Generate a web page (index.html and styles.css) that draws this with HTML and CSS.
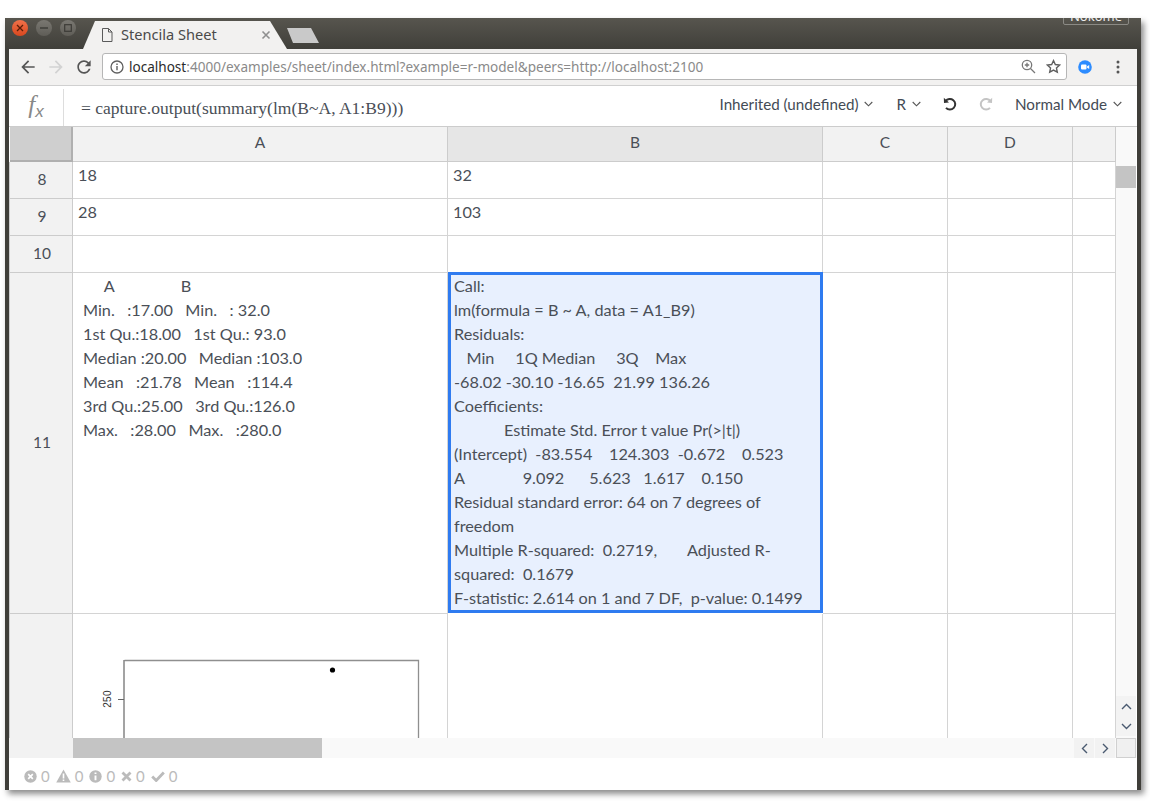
FILE: index.html
```html
<!DOCTYPE html>
<html lang="en">
<head>
<meta charset="utf-8">
<title>Stencila Sheet</title>
<link rel="stylesheet" href="styles.css">
</head>
<body>
<div class="window">
  <div class="titlebar">
    <div class="controls">
      <span class="ctl ctl-close"><svg width="8" height="8" viewBox="0 0 8 8"><path d="M1 1l6 6M7 1l-6 6" stroke="#5a1d08" stroke-width="1.3"/></svg></span>
      <span class="ctl"><svg width="8" height="8" viewBox="0 0 8 8"><path d="M0 4h8" stroke="#3c3b37" stroke-width="1.4"/></svg></span>
      <span class="ctl"><svg width="8" height="8" viewBox="0 0 8 8"><rect x=".7" y=".7" width="6.6" height="6.6" fill="none" stroke="#3c3b37" stroke-width="1.2"/></svg></span>
    </div>
    <div class="tab">
      <svg class="tab-doc" width="12" height="14" viewBox="0 0 12 14"><path d="M1.5.5h6l3.5 3.500v9.500h-9.500zM7.500.5v3.500h3.500" fill="none" stroke="#5a5a5a"/></svg>
      <span class="tab-title">Stencila Sheet</span>
      <svg class="tab-x" width="10" height="10" viewBox="0 0 10 10"><path d="M1.500 1.500l7 7M8.500 1.500l-7 7" stroke="#8f8f8f" stroke-width="1.600"/></svg>
    </div>
    <div class="newtab"></div>
    <div class="badge">Nokome</div>
  </div>
  <div class="body">
    <div class="toolbar">
      <svg class="nav" width="20" height="20" viewBox="0 0 24 24"><path d="M20 11H7.830l5.590-5.590L12 4l-8 8 8 8 1.410-1.410L7.830 13H20v-2z" fill="#555"/></svg>
      <svg class="nav" width="20" height="20" viewBox="0 0 24 24"><path d="M4 11h12.170l-5.590-5.590L12 4l8 8-8 8-1.410-1.410L16.170 13H4v-2z" fill="#d2d2d2"/></svg>
      <svg class="nav" width="20" height="20" viewBox="0 0 24 24"><path d="M17.650 6.350C16.200 4.900 14.210 4 12 4c-4.420 0-7.990 3.580-7.990 8s3.570 8 7.990 8c3.730 0 6.840-2.550 7.730-6h-2.080c-.82 2.330-3.040 4-5.650 4-3.310 0-6-2.690-6-6s2.690-6 6-6c1.660 0 3.140.69 4.220 1.780L13 11h7V4l-2.350 2.350z" fill="#555"/></svg>
      <div class="omnibox">
        <svg class="info" width="14" height="14" viewBox="0 0 14 14"><circle cx="7" cy="7" r="6" fill="none" stroke="#5f5f5f" stroke-width="1.300"/><path d="M7 6v4.200M7 3.600v1.400" stroke="#5f5f5f" stroke-width="1.400"/></svg>
        <span class="url"><span class="host">localhost</span>:4000/examples/sheet/index.html?example=r-model&amp;peers=http://localhost:2100</span>
        <svg class="omni-zoom" width="15" height="15" viewBox="0 0 15 15"><circle cx="6" cy="6" r="4.700" fill="none" stroke="#777" stroke-width="1.300"/><path d="M9.500 9.500l4.500 4.500M6 3.800v4.400M3.800 6h4.400" stroke="#777" stroke-width="1.300"/></svg>
        <svg class="omni-star" width="15" height="15" viewBox="0 0 24 24"><path d="M12 2.500l2.900 6.300 6.900.8-5.100 4.700 1.400 6.800-6.100-3.400-6.100 3.400 1.400-6.800-5.100-4.700 6.900-.8z" fill="none" stroke="#5f5f5f" stroke-width="2.200"/></svg>
      </div>
      <svg class="ext" width="14" height="14" viewBox="0 0 14 14"><circle cx="7" cy="7" r="6.800" fill="#2d8cff"/><rect x="3" y="4.500" width="5.500" height="5" rx="1" fill="#fff"/><path d="M9 6.400l2.200-1.500v4.200L9 7.600z" fill="#fff"/></svg>
      <svg class="menu" width="4" height="14" viewBox="0 0 4 14"><circle cx="2" cy="2" r="1.500" fill="#555"/><circle cx="2" cy="7" r="1.500" fill="#555"/><circle cx="2" cy="12" r="1.500" fill="#555"/></svg>
    </div>
    <div class="formula-bar">
      <div class="fx"><span class="fx-f">f</span><span class="fx-x">x</span></div>
      <div class="formula">= capture.output(summary(lm(B~A, A1:B9)))</div>
      <div class="tools">
        <span class="tool tool-lang">Inherited (undefined)<svg class="chev" width="9" height="6" viewBox="0 0 9 6"><path d="M.7 1l3.800 3.800L8.300 1" fill="none" stroke="#555" stroke-width="1.100"/></svg></span>
        <span class="tool tool-r">R<svg class="chev" width="9" height="6" viewBox="0 0 9 6"><path d="M.7 1l3.800 3.800L8.300 1" fill="none" stroke="#555" stroke-width="1.100"/></svg></span>
        <svg class="undo" width="14" height="14" viewBox="0 0 14 14"><path d="M2.600 4.200A5.300 5.300 0 1 1 3 10.800" fill="none" stroke="#333" stroke-width="2"/><path d="M.8 .8l.2 5.200 5-.4z" fill="#333"/></svg>
        <svg class="redo" width="14" height="14" viewBox="0 0 14 14"><path d="M11.400 4.200A5.300 5.300 0 1 0 11 10.800" fill="none" stroke="#c4c4c4" stroke-width="2"/><path d="M13.200 .8l-.2 5.200-5-.4z" fill="#c4c4c4"/></svg>
        <span class="tool tool-mode">Normal Mode<svg class="chev" width="9" height="6" viewBox="0 0 9 6"><path d="M.7 1l3.800 3.800L8.300 1" fill="none" stroke="#555" stroke-width="1.100"/></svg></span>
      </div>
    </div>
    <div class="sheet">
      <div class="grid">
        <div class="corner"></div>
        <div class="col-h">A</div>
        <div class="col-h col-sel">B</div>
        <div class="col-h">C</div>
        <div class="col-h">D</div>
        <div class="col-h"></div>

        <div class="row-h">8</div><div class="cell">18</div><div class="cell">32</div><div class="cell"></div><div class="cell"></div><div class="cell"></div>
        <div class="row-h">9</div><div class="cell">28</div><div class="cell">103</div><div class="cell"></div><div class="cell"></div><div class="cell"></div>
        <div class="row-h">10</div><div class="cell"></div><div class="cell"></div><div class="cell"></div><div class="cell"></div><div class="cell"></div>

        <div class="row-h">11</div>
        <div class="cell cell-table">     A                B
Min.   :17.00   Min.   : 32.0
1st Qu.:18.00   1st Qu.: 93.0
Median :20.00   Median :103.0
Mean   :21.78   Mean   :114.4
3rd Qu.:25.00   3rd Qu.:126.0
Max.   :28.00   Max.   :280.0</div>
        <div class="cell cell-active"><div class="active-text">Call:
lm(formula = B ~ A, data = A1_B9)
Residuals:
   Min     1Q Median     3Q    Max
-68.02 -30.10 -16.65  21.99 136.26
Coefficients:
            Estimate Std. Error t value Pr(&gt;|t|)
(Intercept)  -83.554    124.303  -0.672    0.523
A              9.092      5.623   1.617    0.150
Residual standard error: 64 on 7 degrees of freedom
Multiple R-squared:  0.2719,	Adjusted R-squared:  0.1679
F-statistic: 2.614 on 1 and 7 DF,  p-value: 0.1499</div></div>
        <div class="cell"></div><div class="cell"></div><div class="cell"></div>

        <div class="row-h row-last"></div>
        <div class="cell cell-plot cell-last"><svg class="plot" width="374" height="124" viewBox="0 0 374 124">
            <path d="M51.500 46.500H345.500V124" fill="none" stroke="#8f8f8f" stroke-width="1.300"/>
            <path d="M45 85.500h6" stroke="#666"/>
            <path d="M51 46v78" stroke="#666" stroke-width="1.200"/>
            <circle cx="259.500" cy="56" r="2.600" fill="#000"/>
            <text class="plot-label" x="0" y="0" transform="translate(38 85) rotate(-90)" text-anchor="middle">250</text>
          </svg></div>
        <div class="cell cell-last"></div><div class="cell cell-last"></div><div class="cell cell-last"></div><div class="cell cell-last"></div>
      </div>
      <div class="vscroll">
        <div class="vthumb"></div>
        <div class="vbtn"><svg width="11" height="7" viewBox="0 0 11 7"><path d="M1 6l4.500-4.500L10 6" fill="none" stroke="#4a5a70" stroke-width="1.400"/></svg></div>
        <div class="vbtn"><svg width="11" height="7" viewBox="0 0 11 7"><path d="M1 1l4.500 4.500L10 1" fill="none" stroke="#4a5a70" stroke-width="1.400"/></svg></div>
      </div>
    </div>
    <div class="hscroll">
      <div class="h-gutter"></div>
      <div class="h-thumb"></div>
      <div class="h-track"></div>
      <div class="hbtn"><svg width="7" height="11" viewBox="0 0 7 11"><path d="M6 1L1.500 5.500 6 10" fill="none" stroke="#4a5a70" stroke-width="1.400"/></svg></div>
      <div class="hbtn"><svg width="7" height="11" viewBox="0 0 7 11"><path d="M1 1l4.500 4.500L1 10" fill="none" stroke="#4a5a70" stroke-width="1.400"/></svg></div>
      <div class="h-corner"></div>
    </div>
    <div class="status">
      <svg class="st-ic" width="13" height="13" viewBox="0 0 13 13"><circle cx="6.500" cy="6.500" r="6.200" fill="#bbb"/><path d="M4.200 4.200l4.600 4.600M8.800 4.200l-4.600 4.600" stroke="#fff" stroke-width="1.700"/></svg><span class="st-n">0</span>
      <svg class="st-ic" width="15" height="14" viewBox="0 0 15 14"><path d="M7.500.5L14.800 13.500H.2z" fill="#bbb"/><path d="M7.500 4.500v5M7.500 10.500v1.500" stroke="#fff" stroke-width="1.600"/></svg><span class="st-n">0</span>
      <svg class="st-ic" width="13" height="13" viewBox="0 0 13 13"><circle cx="6.500" cy="6.500" r="6.200" fill="#bbb"/><path d="M6.500 5.500v4.800M6.500 2.400v1.700" stroke="#fff" stroke-width="1.900"/></svg><span class="st-n">0</span>
      <svg class="st-ic" width="11" height="11" viewBox="0 0 11 11"><path d="M1.500 1.500l8 8M9.500 1.500l-8 8" stroke="#bbb" stroke-width="2.800"/></svg><span class="st-n">0</span>
      <svg class="st-ic" width="14" height="11" viewBox="0 0 14 11"><path d="M1.200 5.500l4 4L12.800 1.500" fill="none" stroke="#bbb" stroke-width="2.800"/></svg><span class="st-n">0</span>
    </div>
  </div>
</div>
</body>
</html>
```
FILE: styles.css
```css
* { box-sizing: border-box; }
html, body { margin: 0; padding: 0; background: #fff; }
body { width: 1150px; height: 812px; overflow: hidden; font-family: "Lato", sans-serif; }

.window {
  margin: 18px 0 0 5px;
  width: 1136px;
  height: 772px;
  background: #3f3e39;
  box-shadow: 3px 4px 6px rgba(0,0,0,.45);
  display: flex;
  flex-direction: column;
  position: relative;
  overflow: hidden;
}
.titlebar {
  height: 31px;
  flex: none;
  display: flex;
  align-items: flex-start;
  background: linear-gradient(#57554e, #403f3a);
  padding-left: 7px;
}
.controls { display: flex; gap: 8px; padding-top: 2px; width: 71px; flex: none; }
.ctl {
  width: 16px; height: 16px; border-radius: 50%;
  background: linear-gradient(#7a7872, #5f5d57);
  display: flex; align-items: center; justify-content: center;
}
.ctl-close { background: linear-gradient(#f0714a, #d9481f); }
.tab {
  width: 204px;
  height: 28px;
  margin-top: 3px;
  background: #f2f1f0;
  clip-path: polygon(0 100%, 12px 0, 187px 0, 204px 100%);
  display: flex;
  align-items: center;
  padding-left: 18px;
  flex: none;
}
.tab-doc { flex: none; }
.tab-title { margin-left: 8px; margin-bottom: 2px; font: 14.600px "Noto Sans", sans-serif; color: #4a4a4a; width: 140px; }
.tab-x { flex: none; }
.newtab {
  width: 32px; height: 15px; margin-top: 10px; margin-left: 0; flex: none;
  background: #c9c9c9;
  clip-path: polygon(0 0, 24px 0, 32px 100%, 6px 100%);
}
.badge {
  position: absolute;
  left: 1058px;
  top: -11px;
  width: 66px;
  height: 18px;
  border: 1px solid #8b8a85;
  border-radius: 2px;
  color: #eee;
  font: 13px/17px "Noto Sans", sans-serif;
  text-align: center;
}
.body {
  flex: 1;
  margin: 0 4px;
  background: #fff;
  display: flex;
  flex-direction: column;
  min-height: 0;
}
.toolbar {
  height: 37px;
  flex: none;
  background: #f2f1f0;
  border-bottom: 1px solid #d0d0d0;
  display: flex;
  align-items: center;
  padding-left: 9px;
}
.nav { flex: none; margin-right: 8px; }
.omnibox {
  width: 965px;
  height: 27px;
  margin-left: 0;
  margin-top: -1px;
  background: #fff;
  border: 1px solid #b6b6b6;
  border-radius: 3px;
  display: flex;
  align-items: center;
  padding-left: 7px;
  flex: none;
}
.info { flex: none; }
.url { margin-left: 5px; font: 13.550px "Noto Sans", sans-serif; color: #8a8a8a; white-space: nowrap; flex: 1; }
.host { color: #2a2a2a; }
.omni-zoom { flex: none; margin-right: 10px; }
.omni-star { flex: none; margin-right: 5px; }
.ext { flex: none; margin-left: 11px; }
.menu { flex: none; margin-left: 24px; }

.formula-bar {
  height: 41px;
  flex: none;
  background: #fff;
  border-bottom: 1px solid #ccc;
  display: flex;
  align-items: stretch;
  position: relative;
}
.fx {
  width: 55px;
  flex: none;
  margin-top: 3px;
  border-right: 1px solid #ddd;
  font-family: "Liberation Serif", serif;
  font-style: italic;
  color: #888;
  text-align: center;
  padding-top: 2px;
}
.fx-f { font-size: 25px; }
.fx-x { font-size: 17px; position: relative; top: 4px; font-family: "Liberation Sans", sans-serif; }
.formula {
  flex: none;
  width: 600px;
  padding: 12px 0 0 17px;
  font: 17.550px/20px "Liberation Serif", serif;
  color: #4a4f57;
}
.tools {
  position: absolute;
  right: 15px;
  top: 0;
  height: 35px;
  display: flex;
  align-items: center;
  font-size: 15.200px;
  color: #444b55;
}
.tool { display: inline-flex; align-items: center; }
.chev { margin-left: 6px; }
.tool-r { margin-left: 23px; }
.undo { margin-left: 22px; }
.redo { margin-left: 22px; }
.tool-mode { margin-left: 22px; }

.sheet { flex: 1; min-height: 0; display: flex; overflow: hidden; }
.grid {
  flex: none;
  width: 1107px;
  display: grid;
  grid-template-columns: 64px 375px 375px 125px 125px 43px;
  grid-template-rows: 35px 37px 37px 37px 341px 125px;
  overflow: hidden;
  font-size: 16.250px;
  color: #4a4f57;
  align-content: start;
}
.corner { background: #cfcfcf; border-right: 2px solid #b0b0b0; border-bottom: 2px solid #b0b0b0; margin-left: 1px; }
.col-h {
  background: #f2f2f2;
  border-right: 1px solid #ccc;
  border-bottom: 1px solid #ccc;
  display: flex; align-items: center; justify-content: center;
  padding-bottom: 5px;
  font-size: 15.500px;
}
.col-sel { background: #e6e6e6; }
.row-h {
  background: #f2f2f2;
  border-left: 1px solid #ccc;
  border-right: 1px solid #ccc;
  border-bottom: 1px solid #ccc;
  display: flex; align-items: center; justify-content: center;
  padding-left: 2px;
  padding-bottom: 2px;
  font-size: 15.500px;
}
.cell {
  border-right: 1px solid #d4d4d4;
  border-bottom: 1px solid #d4d4d4;
  padding: 1px 5px 0 5px;
  line-height: 24px;
  white-space: pre-wrap;
  background: #fff;
  min-width: 0;
  overflow: hidden;
}
.cell-table { padding-left: 10px; }
.cell-active {
  background: #e8f0fe;
  border: 3px solid #2f7bf0;
  margin: -1px 0 0 0;
  padding: 0 3px 0 3px;
  height: 341px;
}
.active-text { margin-top: -1px; }
.cell-plot { padding: 0; }
.plot { display: block; }
.plot-label { font: 10px "Liberation Sans", sans-serif; fill: #333; letter-spacing: .3px; }
.cell-last, .row-last { border-bottom: 0; }

.vscroll {
  width: 20px;
  flex: none;
  background: #f9f9f9;
  display: flex;
  flex-direction: column;
  align-items: stretch;
  padding: 39px 0 2px;
}
.vthumb { height: 22px; background: #c4c4c4; margin-bottom: auto; }
.vbtn { height: 20px; background: #f3f3f3; display: flex; align-items: center; justify-content: center; }

.hscroll { height: 20px; flex: none; display: flex; background: #f9f9f9; }
.h-gutter { width: 64px; background: #f2f2f2; flex: none; }
.h-thumb { width: 249px; background: #c4c4c4; flex: none; }
.h-track { flex: 1; }
.hbtn { width: 20px; margin-right: 1px; background: #f2f2f2; display: flex; align-items: center; justify-content: center; flex: none; }
.h-corner { width: 20px; background: #f0f0f0; border: 1px solid #d0d0d0; flex: none; margin-right: 1px; }

.status {
  height: 32px;
  flex: none;
  display: flex;
  align-items: center;
  padding: 4px 0 0 15px;
  font-size: 15px;
  color: #bbb;
}
.st-n { margin: 0 6px 0 4px; }
```
